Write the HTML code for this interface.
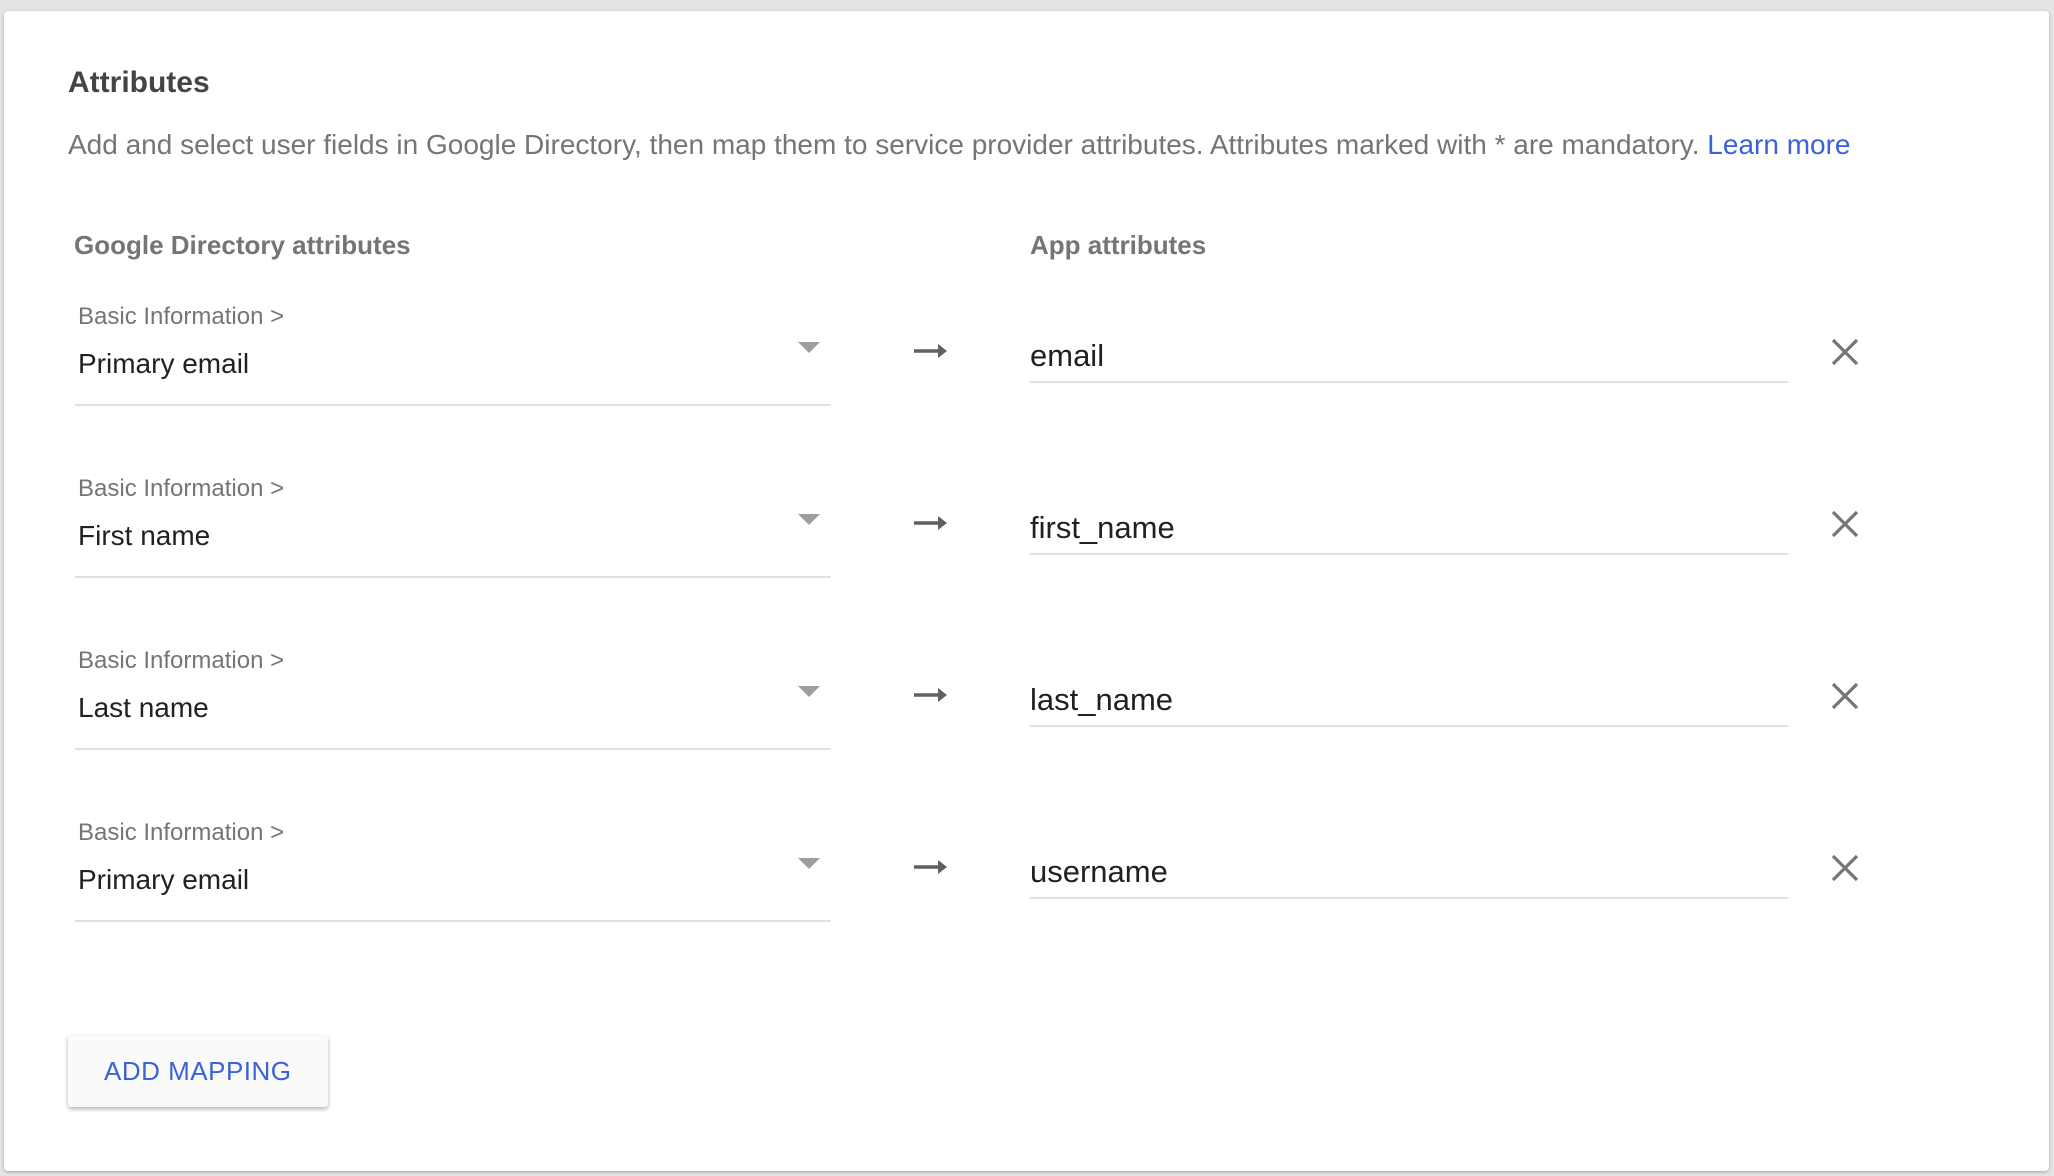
<!DOCTYPE html>
<html><head><meta charset="utf-8"><style>
body{margin:0;width:2054px;height:1176px;background:#e4e4e4;font-family:"Liberation Sans",sans-serif;position:relative;overflow:hidden}
.card{position:absolute;left:4px;top:11px;width:2045px;height:1160px;background:#fff;border-radius:4px;box-shadow:0 1px 3px rgba(0,0,0,.3)}
.a{position:absolute;white-space:nowrap;line-height:1}
.ul{position:absolute;height:2px;background:#e0e0e0}
.tri{position:absolute;width:0;height:0;border-left:11px solid transparent;border-right:11px solid transparent;border-top:11px solid #9e9e9e}
</style></head><body>
<div class="card"></div>
<div class="a" style="left:68px;top:68px;font-size:30px;font-weight:bold;color:#444">Attributes</div>
<div class="a" style="left:68px;top:131px;font-size:28px;color:#757575">Add and select user fields in Google Directory, then map them to service provider attributes. Attributes marked with * are mandatory. <span style="color:#3b62d8">Learn more</span></div>
<div class="a" style="left:74px;top:232px;font-size:26px;font-weight:bold;color:#757575">Google Directory attributes</div>
<div class="a" style="left:1030px;top:232px;font-size:26px;font-weight:bold;color:#757575">App attributes</div>

<div id="rows"></div>
<script>
var vals=[["Primary email","email"],["First name","first_name"],["Last name","last_name"],["Primary email","username"]];
var h="";
vals.forEach(function(v,i){var o=i*172;
h+='<div class="a" style="left:78px;top:'+(305+o)+'px;font-size:24px;color:#757575">Basic Information &gt;</div>';
h+='<div class="a" style="left:78px;font-size:28px;color:#212121;top:'+(350+o)+'px">'+v[0]+'</div>';
h+='<div class="ul" style="left:75px;width:756px;top:'+(404+o)+'px"></div>';
h+='<div class="tri" style="left:798px;top:'+(342+o)+'px"></div>';
h+='<svg style="position:absolute;left:912px;top:'+(342+o)+'px" width="38" height="18"><path d="M2 9H30" stroke="#616161" stroke-width="3.5"/><path d="M26 2L35 9L26 16Z" fill="#616161"/></svg>';
h+='<div class="a" style="left:1030px;top:'+(340+o)+'px;font-size:31px;color:#212121">'+v[1]+'</div>';
h+='<div class="ul" style="left:1030px;width:758px;top:'+(381+o)+'px"></div>';
h+='<svg style="position:absolute;left:1831px;top:'+(338+o)+'px" width="28" height="28"><path d="M2 2L26 26M26 2L2 26" stroke="#757575" stroke-width="3.2"/></svg>';
});
document.getElementById("rows").innerHTML=h;
</script>
<div style="position:absolute;left:68px;top:1035px;width:260px;height:72px;background:#fafafa;border-radius:3px;box-shadow:0 2px 4px rgba(0,0,0,.3)"></div>
<div class="a" style="left:104px;top:1058px;font-size:26px;color:#3b62d8;letter-spacing:.5px">ADD MAPPING</div>
</body></html>
